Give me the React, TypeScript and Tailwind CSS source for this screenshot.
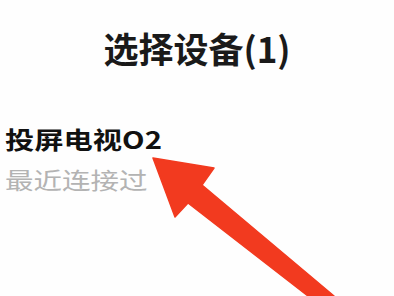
export default function App() {
  return (
    <div
      className="relative w-[394px] h-[296px] overflow-hidden bg-[#fefefe]"
      style={{ fontFamily: '"Noto Sans CJK SC", "Noto Sans", sans-serif' }}
    >
      {/* Header */}
      <div className="flex justify-center pt-[23px]">
        <h1 className="text-[35px] leading-[50px] font-bold text-[#1a1a1a]">选择设备(1)</h1>
      </div>

      {/* Device row */}
      <div className="flex flex-col items-start pl-[5px] pt-[51px]">
        <div className="origin-left scale-x-[1.22] text-[24px] leading-[30px] font-bold text-[#111]">
          投屏电视O2
        </div>
        <div className="mt-[10px] origin-left scale-x-[1.24] text-[23px] leading-[30px] text-[#b3b3b3]">
          最近连接过
        </div>
      </div>

      {/* Red arrow pointing at device */}
      <svg
        className="absolute left-0 top-0 pointer-events-none"
        width="394"
        height="296"
        viewBox="0 0 394 296"
      >
        <polygon
          points="153,158 214,168 202,185 334,296 308,296 188,203 175,217"
          fill="#f23a1f"
          stroke="#f23a1f"
          strokeWidth="1.5"
          strokeLinejoin="round"
        />
      </svg>
    </div>
  )
}
